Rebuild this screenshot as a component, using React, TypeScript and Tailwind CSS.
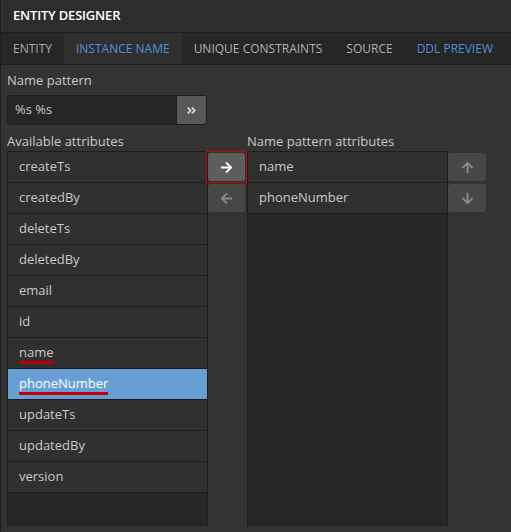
import React from "react";
import { FaArrowRight, FaArrowLeft, FaArrowUp, FaArrowDown, FaAngleDoubleRight } from "react-icons/fa";

const left = ["createTs","createdBy","deleteTs","deletedBy","email","id","name","phoneNumber","updateTs","updatedBy","version"];
const right = ["name","phoneNumber"];

export default function App() {
  return (
    <div className="w-[511px] h-[532px] bg-[#333333] border-l border-[#1e1e1e] text-[#c8c8c8] overflow-hidden" style={{fontFamily: '"Open Sans", "Noto Sans", sans-serif'}}>
      <div className="h-[33px] bg-[#2d2d2d] border-b border-[#1e1e1e] flex items-center pl-[12px] text-white text-[13px] font-semibold tracking-[-0.2px]">ENTITY DESIGNER</div>
      <div className="h-[32px] bg-[#262626] border-b border-[#1e1e1e] flex text-[12px]">
        <div className="px-[12px] flex items-center text-[#a8a8a8]">ENTITY</div>
        <div className="px-[12px] flex items-center bg-[#2f2f2f] text-[#4f8ed8]">INSTANCE NAME</div>
        <div className="px-[12px] flex items-center text-[#b0b0b0]">UNIQUE CONSTRAINTS</div>
        <div className="px-[12px] flex items-center text-[#b0b0b0]">SOURCE</div>
        <div className="px-[12px] flex items-center text-[#4f8ed8]">DDL PREVIEW</div>
      </div>
      <div className="pl-[6px] text-[13px]">
        <div className="pt-[6px] h-[24px] leading-[18px] text-[#c8c8c8]">Name pattern</div>
        <div className="mt-[6px] w-[200px] h-[30px] flex rounded-[3px] border border-[#1e1e1e] bg-[#262626] overflow-hidden">
          <div className="flex-1 flex items-center pl-[7px] text-[#c8c8c8]">%s %s</div>
          <div className="w-[30px] bg-[#585858] flex items-center justify-center text-[#d8d8d8] border-l border-[#1e1e1e]"><FaAngleDoubleRight size={11} /></div>
        </div>
        <div className="flex mt-[7px]">
          <div className="w-[201px]">
            <div className="h-[19px] leading-[18px]">Available attributes</div>
            <div className="h-[375px] bg-[#262626] border border-[#1e1e1e]">
              {left.map((n) => (
                <div key={n} className={`h-[31px] border-b border-[#1e1e1e] flex items-center pl-[11px] ${n === "phoneNumber" ? "bg-[#679fd5] text-white" : "bg-[#303030] text-[#c8c8c8]"}`}>
                  <span className={n === "name" || n === "phoneNumber" ? "border-b-[3px] border-[#c00000] leading-[18px]" : ""}>{n}</span>
                </div>
              ))}
            </div>
          </div>
          <div className="relative z-10 w-[39px] pt-[19px] flex flex-col">
            <div className="-ml-[2px] w-[41px] h-[32px] border-[1px] border-solid border-[#d00000] p-[1px]">
              <div className="w-[37px] h-[28px] bg-[#5e5e5e] rounded-[3px] flex items-center justify-center text-white">
                <FaArrowRight size={13} />
              </div>
            </div>
            <div className="mt-[1px] w-[37px] h-[28px] bg-[#474747] rounded-[3px] flex items-center justify-center text-[#8a8a8a]"><FaArrowLeft size={13} /></div>
          </div>
          <div className="w-[201px]">
            <div className="h-[19px] leading-[18px]">Name pattern attributes</div>
            <div className="h-[375px] bg-[#262626] border border-[#1e1e1e]">
              {right.map((n) => (
                <div key={n} className="h-[31px] border-b border-[#1e1e1e] flex items-center pl-[11px] bg-[#303030] text-[#c8c8c8]">{n}</div>
              ))}
            </div>
          </div>
          <div className="pt-[21px] flex flex-col gap-[3px]">
            <div className="w-[38px] h-[28px] bg-[#474747] rounded-[3px] flex items-center justify-center text-[#8a8a8a]"><FaArrowUp size={13} /></div>
            <div className="w-[38px] h-[28px] bg-[#474747] rounded-[3px] flex items-center justify-center text-[#8a8a8a]"><FaArrowDown size={13} /></div>
          </div>
        </div>
      </div>
    </div>
  );
}
